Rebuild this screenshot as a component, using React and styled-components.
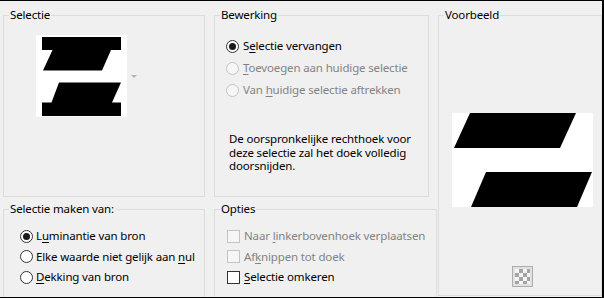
import React from 'react';
import styled, { createGlobalStyle } from 'styled-components';

const Global = createGlobalStyle`
  html, body { margin: 0; padding: 0; background: #f0f0f0; }
  body {
    font-family: "Noto Sans", "Open Sans", sans-serif;
    font-size: 11.5px;
    letter-spacing: -0.15px;
    color: #000;
  }
  * { box-sizing: border-box; }
`;

const Frame = styled.div`
  width: 604px;
  height: 298px;
  border-top: 1px solid #000;
  border-right: 2px solid #000;
  border-bottom: 1px solid #000;
  background: #f0f0f0;
  overflow: hidden;
  display: grid;
  grid-template-columns: 202px 215px 164px;
  grid-template-rows: 189px 94px;
  column-gap: 9px;
  row-gap: 5px;
  padding: 7px 0 0 3px;
`;

const Group = styled.fieldset`
  margin: 0;
  min-width: 0;
  padding: 0;
  border: 1px solid #dcdcdc;
  grid-column: ${p => p.$col};
  grid-row: ${p => p.$row};
  margin-bottom: ${p => (p.$open ? '-8px' : '0')};
  margin-right: ${p => p.$extendRight || '0'};
`;

const Legend = styled.legend`
  margin-left: 5px;
  padding: 0 1px;
  line-height: 14px;
`;

const Body = styled.div`
  padding: ${p => p.$pad};
  display: flex;
  flex-direction: column;
  align-items: ${p => (p.$center ? 'center' : 'flex-start')};
`;

const ThumbRow = styled.div`
  display: flex;
  align-items: center;
  gap: 4px;
`;

const WhiteBox = styled.div`
  width: ${p => p.$w}px;
  height: ${p => p.$h}px;
  background: #fff;
  display: flex;
`;

const DropArrow = styled.span`
  width: 0;
  height: 0;
  border-left: 3px solid transparent;
  border-right: 3px solid transparent;
  border-top: 3px solid #b4b4b4;
`;

const OptionList = styled.div`
  display: flex;
  flex-direction: column;
`;

const OptionRow = styled.label`
  display: flex;
  align-items: center;
  gap: ${p => p.$gap || 3}px;
  height: ${p => p.$h}px;
  color: ${p => (p.$disabled ? '#838383' : '#000')};
  white-space: nowrap;
  line-height: 14px;
`;

const Radio = styled.span`
  width: 13px;
  height: 13px;
  border-radius: 50%;
  border: 1px solid ${p => (p.$disabled ? '#c4c4c4' : '#333')};
  background: ${p => (p.$disabled ? '#f6f6f6' : '#fff')};
  display: flex;
  align-items: center;
  justify-content: center;
  flex: none;
  &::after {
    content: '';
    width: 7px;
    height: 7px;
    border-radius: 50%;
    background: #1a1a1a;
    display: ${p => (p.$checked ? 'block' : 'none')};
  }
`;

const Check = styled.span`
  width: 13px;
  height: 13px;
  border: 1px solid ${p => (p.$disabled ? '#c4c4c4' : '#333')};
  background: ${p => (p.$disabled ? '#f6f6f6' : '#fff')};
  flex: none;
`;

const Key = styled.u`
  text-decoration-thickness: 1px;
  text-underline-offset: 2px;
`;

const Note = styled.p`
  margin: 31px 0 0 3px;
  line-height: 13.5px;
  width: 186px;
`;

const Spacer = styled.div`
  height: ${p => p.$h}px;
  flex: none;
`;

const CheckerButton = styled.span`
  width: 21px;
  height: 21px;
  border: 1px solid #adadad;
  background: #e1e1e1;
  display: flex;
  align-items: center;
  justify-content: center;
  &::after {
    content: '';
    width: 15px;
    height: 15px;
    background: repeating-conic-gradient(#a4a4a4 0 25%, #f4f4f4 0 50%) 0 0 / 8px 8px;
  }
`;

const SelectionThumb = () => (
  <svg width="91" height="82" viewBox="0 0 91 82">
    <polygon fill="#000" points="6,2 85,2 85,15 75,15 66,35.5 7,35.5 16.5,15 6,15" />
    <polygon fill="#000" points="23,47.5 85,47.5 76,67.5 85,67.5 85,81 6,81 6,67.5 15.5,67.5" />
  </svg>
);

const PreviewShape = () => (
  <svg width="141" height="94" viewBox="0 0 141 94">
    <polygon fill="#000" points="18,0 124,0 108,35 2,35" />
    <polygon fill="#000" points="34,59 140,59 125,94 19,94" />
  </svg>
);

export default function App() {
  return (
    <>
      <Global />
      <Frame>
        <Group $col="1" $row="1">
          <Legend>Selectie</Legend>
          <Body $pad="13px 0 0 32px">
            <ThumbRow>
              <WhiteBox $w={91} $h={82}>
                <SelectionThumb />
              </WhiteBox>
              <DropArrow />
            </ThumbRow>
          </Body>
        </Group>

        <Group $col="2" $row="1">
          <Legend>Bewerking</Legend>
          <Body $pad="13px 0 0 11px">
            <OptionList>
              <OptionRow $h={22} $gap={4}>
                <Radio $checked />
                <span>S<Key>e</Key>lectie vervangen</span>
              </OptionRow>
              <OptionRow $h={22} $gap={4} $disabled>
                <Radio $disabled />
                <span><Key>T</Key>oevoegen aan huidige selectie</span>
              </OptionRow>
              <OptionRow $h={22} $gap={4} $disabled>
                <Radio $disabled />
                <span>Van <Key>h</Key>uidige selectie aftrekken</span>
              </OptionRow>
            </OptionList>
            <Note>
              De oorspronkelijke rechthoek voor deze selectie zal het doek volledig doorsnijden.
            </Note>
          </Body>
        </Group>

        <Group $col="3" $row="1 / span 2">
          <Legend>Voorbeeld</Legend>
          <Body $center $pad="91px 0 0 4px">
            <WhiteBox $w={141} $h={94}>
              <PreviewShape />
            </WhiteBox>
            <Spacer $h={59} />
            <CheckerButton />
          </Body>
        </Group>

        <Group $col="1" $row="2" $open>
          <Legend>Selectie maken van:</Legend>
          <Body $pad="10px 0 0 16px">
            <OptionList>
              <OptionRow $h={20.5}>
                <Radio $checked />
                <span>L<Key>u</Key>minantie van bron</span>
              </OptionRow>
              <OptionRow $h={20.5}>
                <Radio />
                <span>Elke waarde niet gelijk aan <Key>n</Key>ul</span>
              </OptionRow>
              <OptionRow $h={20.5}>
                <Radio />
                <span><Key>D</Key>ekking van bron</span>
              </OptionRow>
            </OptionList>
          </Body>
        </Group>

        <Group $col="2" $row="2" $open $extendRight="-8px">
          <Legend>Opties</Legend>
          <Body $pad="10px 0 0 12px">
            <OptionList>
              <OptionRow $h={20.5} $gap={4} $disabled>
                <Check $disabled />
                <span>Naar <Key>l</Key>inkerbovenhoek verplaatsen</span>
              </OptionRow>
              <OptionRow $h={20.5} $gap={4} $disabled>
                <Check $disabled />
                <span>Af<Key>k</Key>nippen tot doek</span>
              </OptionRow>
              <OptionRow $h={20.5} $gap={4}>
                <Check />
                <span><Key>S</Key>electie omkeren</span>
              </OptionRow>
            </OptionList>
          </Body>
        </Group>
      </Frame>
    </>
  );
}
